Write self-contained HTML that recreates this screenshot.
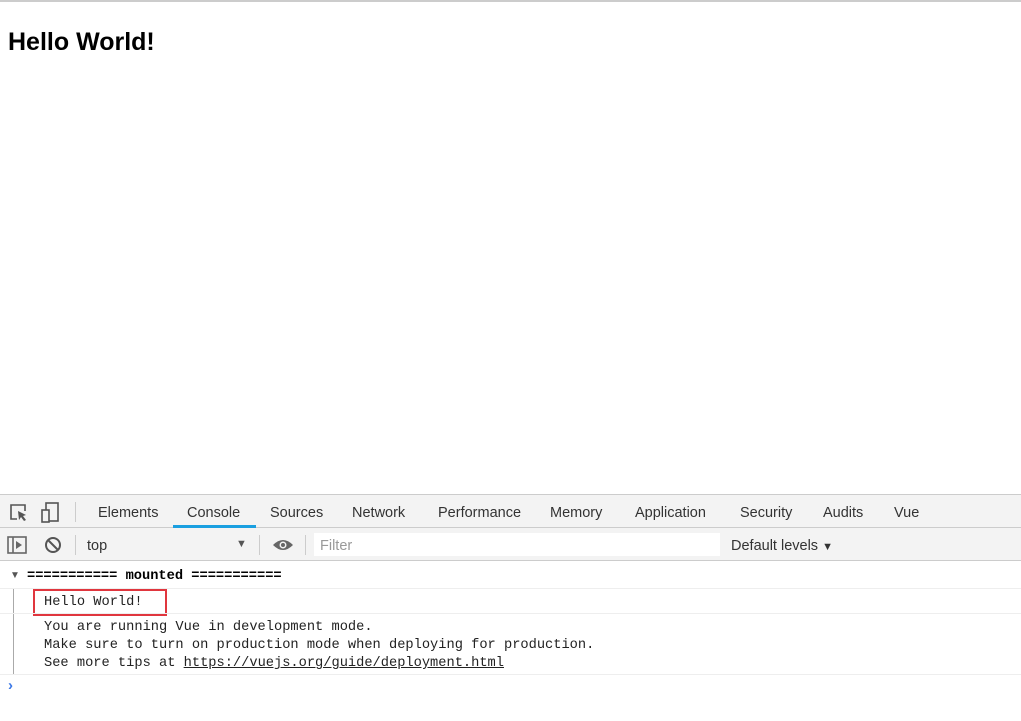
<!DOCTYPE html>
<html><head><meta charset="utf-8"><style>
*{margin:0;padding:0;box-sizing:border-box}
body{width:1021px;height:721px;background:#fff;font-family:"Liberation Sans",sans-serif;position:relative;overflow:hidden}
.a{position:absolute}
h1{position:absolute;left:8px;top:28px;font-size:25px;font-weight:bold;color:#000}
.tabs{left:0;top:494px;width:1021px;height:34px;background:#f3f3f3;border-top:1px solid #ccc;border-bottom:1px solid #ccc}
.tab{position:absolute;top:9px;font-size:14.5px;color:#333}
.bar2{left:0;top:528px;width:1021px;height:33px;background:#f3f3f3;border-bottom:1px solid #ccc}
.mono{font-family:"Liberation Mono",monospace;font-size:13.7px;color:#222;position:absolute;white-space:pre}
</style></head><body>
<div class="a" style="left:0;top:0;width:1021px;height:2px;background:#ccc"></div>
<h1>Hello World!</h1>
<div class="a tabs">
 <svg class="a" style="left:9px;top:8px" width="20" height="20" viewBox="0 0 20 20"><path d="M8 16H2V2h14v6" fill="none" stroke="#555" stroke-width="1.6"/><path d="M9 8l8 4-3 1 3 4-2 1-3-4-2 3z" fill="#555"/></svg>
 <svg class="a" style="left:40px;top:7px" width="20" height="22" viewBox="0 0 20 22"><rect x="6" y="1" width="12" height="18" fill="none" stroke="#555" stroke-width="1.6"/><rect x="2" y="8" width="7" height="12" fill="#f3f3f3" stroke="#555" stroke-width="1.6"/></svg>
 <div class="a" style="left:75px;top:7px;width:1px;height:20px;background:#ccc"></div>
 <span class="tab" style="left:98px;top:10px">Elements</span>
 <span class="tab" style="left:187px;top:10px">Console</span>
 <div class="a" style="left:173px;top:30px;width:83px;height:3px;background:#1a9fe0"></div>
 <span class="tab" style="left:270px;top:10px">Sources</span>
 <span class="tab" style="left:352px;top:10px">Network</span>
 <span class="tab" style="left:438px;top:10px">Performance</span>
 <span class="tab" style="left:550px;top:10px">Memory</span>
 <span class="tab" style="left:635px;top:10px">Application</span>
 <span class="tab" style="left:740px;top:10px">Security</span>
 <span class="tab" style="left:823px;top:10px">Audits</span>
 <span class="tab" style="left:894px;top:10px">Vue</span>
</div>
<div class="a bar2">
 <svg class="a" style="left:7px;top:8px" width="20" height="18" viewBox="0 0 20 18"><rect x="1" y="1" width="18" height="16" fill="none" stroke="#666" stroke-width="1.6"/><line x1="6" y1="1" x2="6" y2="17" stroke="#666" stroke-width="1.6"/><path d="M9 5l6 4-6 4z" fill="#666"/></svg>
 <svg class="a" style="left:44px;top:8px" width="18" height="18" viewBox="0 0 18 18"><circle cx="9" cy="9" r="7" fill="none" stroke="#555" stroke-width="2"/><line x1="4" y1="4" x2="14" y2="14" stroke="#555" stroke-width="2"/></svg>
 <div class="a" style="left:75px;top:7px;width:1px;height:20px;background:#ccc"></div>
 <span class="a" style="left:87px;top:10px;font-size:14.5px;color:#333">top</span>
 <span class="a" style="left:236px;top:10px;font-size:11px;color:#555">▼</span>
 <div class="a" style="left:259px;top:7px;width:1px;height:20px;background:#ccc"></div>
 <svg class="a" style="left:272px;top:10px" width="22" height="14" viewBox="0 0 22 14"><path d="M1 7Q11-3 21 7Q11 17 1 7z" fill="#666"/><circle cx="11" cy="7" r="3.5" fill="#f3f3f3"/><circle cx="11" cy="7" r="2" fill="#666"/></svg>
 <div class="a" style="left:305px;top:7px;width:1px;height:20px;background:#ccc"></div>
 <div class="a" style="left:314px;top:5px;width:406px;height:23px;background:#fff"></div>
 <span class="a" style="left:320px;top:10px;font-size:14.5px;color:#999">Filter</span>
 <span class="a" style="left:731px;top:10px;font-size:14.5px;color:#333">Default levels <span style="font-size:11px">▼</span></span>
</div>
<span class="a" style="left:10px;top:570px;font-size:10px;color:#555">▼</span>
<span class="mono" style="left:27px;top:569px;font-weight:bold;color:#000">=========== mounted ===========</span>
<div class="a" style="left:0;top:588px;width:1021px;height:1px;background:#eee"></div>
<div class="a" style="left:13px;top:589px;width:1px;height:85px;background:#aaa"></div>
<div class="a" style="left:33px;top:589px;width:134px;height:27px;border:2px solid #e0363e"></div>
<span class="mono" style="left:44px;top:595px">Hello World!</span>
<div class="a" style="left:0;top:613px;width:1021px;height:1px;background:#eee"></div>
<span class="mono" style="left:44px;top:620px">You are running Vue in development mode.</span>
<span class="mono" style="left:44px;top:638px">Make sure to turn on production mode when deploying for production.</span>
<span class="mono" style="left:44px;top:656px">See more tips at <u>https://vuejs.org/guide/deployment.html</u></span>
<div class="a" style="left:0;top:674px;width:1021px;height:1px;background:#eee"></div>
<span class="a" style="left:8px;top:677px;font-size:15px;color:#3b78e7;font-weight:bold">›</span>
</body></html>
